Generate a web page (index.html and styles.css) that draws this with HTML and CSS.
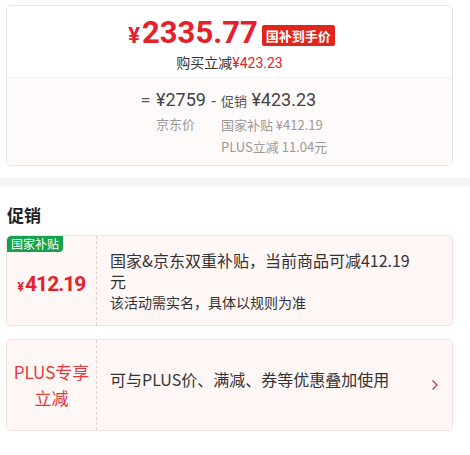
FILE: index.html
```html
<!DOCTYPE html>
<html lang="zh-CN">
<head>
<meta charset="utf-8">
<link rel="stylesheet" href="styles.css">
</head>
<body>
<div class="price-card">
  <div class="price-top">
    <div class="final-row">
      <span class="final-price"><span class="yen">¥</span>2335.77</span>
      <span class="final-tag">国补到手价</span>
    </div>
    <div class="save-line">购买立减<span class="red">¥423.23</span></div>
  </div>
  <div class="price-bottom">
    <span class="op">=</span>
    <div class="col">
      <div class="big">¥2759</div>
      <div class="sub">京东价</div>
    </div>
    <span class="op minus">-</span>
    <div class="col">
      <div class="big"><span class="small-label">促销</span> ¥423.23</div>
      <div class="sub">国家补贴 ¥412.19</div>
      <div class="sub">PLUS立减 11.04元</div>
    </div>
  </div>
</div>

<div class="band"></div>

<h2 class="section-title">促销</h2>

<div class="promo">
  <div class="promo-left">
    <span class="green-tag">国家补贴</span>
    <span class="promo-price"><span class="yen-s">¥</span>412.19</span>
  </div>
  <div class="promo-right">
    <div class="promo-text">
      <div class="line-main">国家&amp;京东双重补贴，当前商品可减412.19元</div>
      <div class="line-sub">该活动需实名，具体以规则为准</div>
    </div>
  </div>
</div>

<div class="promo promo-plus">
  <div class="promo-left">
    <span class="plus-title">PLUS专享<br>立减</span>
  </div>
  <div class="promo-right plus-right">
    <div class="plus-text">可与PLUS价、满减、券等优惠叠加使用</div>
    <svg class="chev" width="8" height="12" viewBox="0 0 8 12"><polyline points="1.5,1.5 6,6 1.5,10.5" fill="none" stroke="#c0405a" stroke-width="1.4"/></svg>
  </div>
</div>
</body>
</html>
```

FILE: styles.css
```css
* { box-sizing: border-box; }
body {
  margin: 0;
  background: #fff;
  font-family: "Noto Sans", "Noto Sans CJK SC", sans-serif;
  color: #333;
}
.red { color: #e4202b; }

.price-card {
  margin: 5px 17px 0 6px;
  border: 1px solid #e6e6e6;
  border-radius: 5px;
  overflow: hidden;
}
.price-top {
  height: 71px;
  padding-top: 10px;
  display: flex;
  flex-direction: column;
  align-items: center;
  background: #fff;
}
.final-row {
  display: flex;
  align-items: center;
  height: 36px;
  padding-left: 4px;
}
.final-price {
  font-family: Roboto, "Noto Sans", sans-serif;
  font-weight: 700;
  font-size: 31px;
  line-height: 36px;
  color: #e4202b;
}
.final-price .yen { font-size: 22px; margin-right: 2px; }
.final-tag {
  margin-left: 4px;
  margin-top: 2px;
  background: #e1251b;
  color: #fff;
  font-family: "Noto Sans CJK SC", sans-serif;
  font-weight: 700;
  font-size: 13px;
  line-height: 21px;
  height: 21px;
  padding: 0 4px;
  border-radius: 2px;
}
.save-line {
  font-family: "Noto Sans CJK SC", sans-serif;
  font-size: 14px;
  line-height: 20px;
  color: #333;
}
.save-line .red { font-family: Roboto, sans-serif; }

.price-bottom {
  background: #fffafa;
  border-top: 1px solid #fbeeee;
  padding: 9px 0 7px 134px;
  display: flex;
  align-items: flex-start;
  color: #444;
}
.op {
  font-size: 16px;
  line-height: 26px;
  width: 15px;
  color: #555;
}
.op.minus { width: 10px; margin-left: 5px; }
.col { display: flex; flex-direction: column; }
.big {
  font-family: Roboto, "Noto Sans CJK SC", sans-serif;
  font-size: 18px;
  line-height: 26px;
  color: #444;
}
.small-label {
  font-family: "Noto Sans CJK SC", sans-serif;
  font-size: 13px;
  color: #555;
}
.sub {
  font-family: "Noto Sans CJK SC", sans-serif;
  font-size: 13px;
  line-height: 22px;
  color: #999;
}

.band {
  margin-top: 12px;
  height: 9px;
  background: #f6f6f6;
}
.section-title {
  margin: 0;
  padding: 16px 0 0 7px;
  font-family: "Noto Sans CJK SC", sans-serif;
  font-size: 17px;
  font-weight: 700;
  line-height: 24px;
  color: #222;
}

.promo {
  margin: 8px 17px 0 6px;
  height: 91px;
  border: 1px solid #f3e0e0;
  border-radius: 5px;
  background: #fff6f6;
  display: flex;
  overflow: hidden;
}
.promo-plus { margin-top: 13px; height: 92px; }
.promo-left {
  position: relative;
  width: 90px;
  flex: none;
  border-right: 1px dashed #ebcccc;
  display: flex;
  align-items: center;
  justify-content: center;
}
.green-tag {
  position: absolute;
  left: 0;
  top: 0;
  background: #14a24a;
  color: #fff;
  font-family: "Noto Sans CJK SC", sans-serif;
  font-size: 12px;
  line-height: 16px;
  padding: 0 4px;
  border-radius: 4px 0 4px 0;
}
.promo-price {
  margin-top: 6px;
  font-family: Roboto, sans-serif;
  font-weight: 700;
  font-size: 21px;
  letter-spacing: -1px;
  color: #e4202b;
}
.yen-s { font-size: 12px; margin-right: 1px; letter-spacing: 0; }
.promo-right {
  flex: 1;
  display: flex;
  align-items: center;
  padding-left: 13px;
}
.promo-text { width: 312px; }
.line-main {
  font-family: "Noto Sans CJK SC", sans-serif;
  font-size: 16px;
  line-height: 21px;
  color: #333;
}
.line-sub {
  font-family: "Noto Sans CJK SC", sans-serif;
  font-size: 14px;
  line-height: 20px;
  color: #333;
}
.plus-title {
  font-family: "Noto Sans CJK SC", sans-serif;
  font-size: 17px;
  line-height: 26px;
  color: #e4393c;
  text-align: center;
}
.plus-right {
  justify-content: space-between;
  padding-right: 13px;
}
.plus-text {
  font-family: "Noto Sans CJK SC", sans-serif;
  font-size: 16px;
  line-height: 22px;
  color: #333;
  margin-bottom: 12px;
}
.chev { display: block; }
```
